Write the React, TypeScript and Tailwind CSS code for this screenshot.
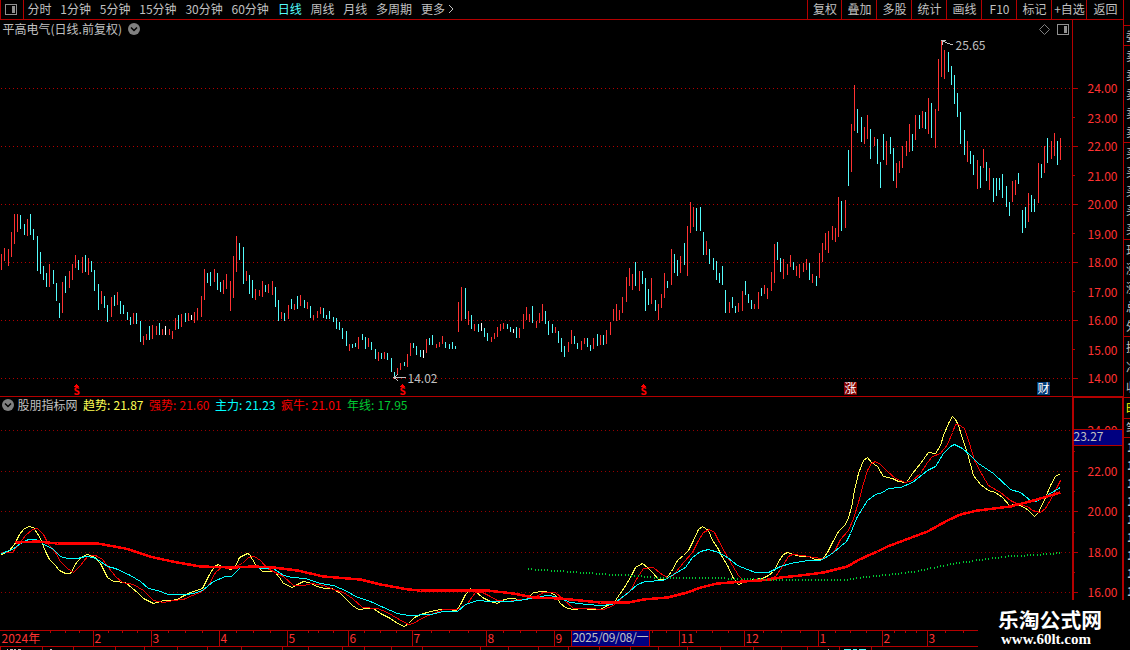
import { ReactNode } from 'react';
import clsx from 'clsx';

type Point = [number, number];

const PERIODS = ['分时', '1分钟', '5分钟', '15分钟', '30分钟', '60分钟', '日线', '周线', '月线', '多周期', '更多'];
const ACTIONS = ['复权', '叠加', '多股', '统计', '画线', 'F10', '标记', '+自选', '返回'];

// x, top, bottom, kind (r = up, c = down, w = flat)
const BARS = `1,254,270,r 4,248,261,r 8,249,266,r 11,232,257,r 14,214,244,r 17,214,232,r 20,215,229,c 24,224,235,c 27,219,236,r 30,214,235,c
33,229,240,c 37,236,271,c 40,252,274,c 43,266,280,c 46,273,287,c 49,264,287,r 53,270,284,c 56,283,301,c 59,303,318,c 62,282,313,r
65,276,293,c 69,271,288,r 72,264,280,r 75,255,268,r 78,260,270,c 82,257,273,r 85,255,272,c 88,258,275,r 91,261,272,c 94,270,291,c
98,284,310,c 101,291,304,r 104,296,308,c 107,305,322,c 111,297,317,r 114,295,306,c 117,292,305,r 120,301,314,c 123,305,314,c 127,312,320,c
130,317,325,c 133,313,324,r 136,313,324,c 140,321,342,c 143,336,345,r 146,334,340,r 149,326,340,c 152,325,339,r 156,326,335,r 159,323,335,c
162,329,335,r 165,326,335,w 169,329,335,r 172,331,339,r 175,318,330,r 178,315,329,c 181,314,327,r 185,313,322,c 188,313,321,r 191,315,320,w
194,312,323,r 197,308,320,r 201,296,317,r 204,269,300,r 207,273,283,c 210,272,286,c 214,269,282,r 217,273,290,c 220,282,292,c 223,280,294,r
226,274,289,r 230,281,311,r 233,256,298,r 236,236,272,r 239,243,260,c 243,247,284,c 246,271,281,r 249,275,294,c 252,280,298,c 255,289,300,r
259,290,296,r 262,281,297,r 265,285,292,c 268,284,293,r 272,281,295,r 275,287,307,c 278,300,321,c 281,312,319,r 284,313,321,c 288,305,319,r
291,299,309,c 294,304,310,r 297,296,309,c 300,295,306,r 304,300,308,c 307,302,309,r 310,306,318,c 313,315,320,r 317,311,318,r 320,307,314,r
323,308,318,c 326,315,319,c 329,311,319,c 333,317,322,c 336,318,329,c 339,322,330,c 342,328,339,c 346,331,346,c 349,344,351,r 352,344,348,c
355,343,347,c 358,337,349,r 362,334,340,c 365,337,349,c 368,338,347,r 371,342,350,c 375,349,359,c 378,352,361,r 381,353,359,c 384,352,359,r
387,353,360,c 391,358,372,c 394,372,378,c 397,368,374,r 400,363,370,r 404,362,366,c 407,354,367,r 410,343,356,r 413,343,348,c 416,346,355,c
420,350,357,c 423,350,358,w 426,339,353,r 429,338,345,c 432,335,345,c 436,344,348,r 439,342,347,r 442,336,344,r 445,342,348,c 449,344,349,c
452,342,349,c 455,346,349,c 458,302,332,r 461,287,321,r 465,288,319,c 468,311,325,r 471,315,329,c 474,324,331,r 478,324,332,c 481,323,331,w
484,328,337,c 487,333,341,c 491,337,342,r 494,333,339,r 497,327,337,r 500,324,331,r 503,323,329,r 507,324,329,c 510,327,332,c 513,329,333,w
516,327,338,c 519,328,338,r 523,314,329,r 526,307,320,r 529,314,322,r 532,306,323,c 536,321,328,r 539,313,323,r 542,304,321,r 545,311,324,c
548,321,335,c 552,324,333,c 555,327,333,r 558,331,343,c 561,338,352,c 564,346,357,c 568,342,352,r 571,330,344,r 574,336,344,c 577,343,349,c
581,341,350,r 584,338,344,r 587,338,347,c 590,345,351,c 593,338,349,r 597,334,346,c 600,335,345,r 603,335,345,c 606,330,344,r 610,322,335,r
613,309,321,r 616,304,321,r 619,310,320,r 622,297,313,r 626,277,302,r 629,268,286,r 632,274,290,r 635,262,286,c 639,271,291,r 642,271,284,c
645,278,311,c 648,289,305,c 651,278,304,r 655,300,311,c 658,304,320,r 661,294,308,r 664,273,298,r 667,281,288,c 671,249,285,r 674,254,273,c
677,260,276,c 680,256,273,r 684,243,265,c 687,226,276,r 690,202,233,r 693,207,227,r 696,208,231,c 700,207,231,c 703,232,255,c 706,241,255,r
709,249,264,c 713,258,270,c 716,261,280,c 719,273,283,c 722,266,285,c 725,290,313,c 729,302,313,r 732,297,308,c 735,306,313,c 738,303,312,r
742,291,311,r 745,281,295,c 748,294,303,c 751,300,309,c 754,304,309,r 758,292,309,r 761,288,296,c 764,285,294,r 767,288,299,r 771,272,291,r
774,244,283,r 777,242,260,c 780,258,272,c 783,259,279,r 787,264,275,r 790,255,267,r 793,262,270,c 796,266,276,r 799,264,278,r 803,263,272,r
806,259,270,r 809,263,280,c 812,274,283,r 816,276,286,c 819,253,278,r 822,243,262,r 825,233,250,r 828,231,253,r 832,226,240,r 835,228,242,r
838,197,237,r 841,201,231,c 845,200,228,r 848,150,186,c 851,124,172,r 854,85,131,r 857,109,133,c 861,117,142,c 864,127,144,r 867,115,139,r
870,129,159,c 874,137,146,r 877,139,164,c 880,162,188,c 883,134,160,c 886,141,165,r 890,137,154,c 893,148,181,c 896,163,188,r 899,161,173,r
902,146,168,r 906,141,156,r 909,124,152,r 912,134,151,c 915,115,140,r 919,115,129,c 922,111,128,r 925,112,129,c 928,98,134,r 931,103,138,c
935,109,148,r 938,59,111,r 941,40,77,r 944,50,79,r 948,52,72,c 951,66,85,c 954,75,104,c 957,93,117,c 960,112,144,c 964,130,155,c
967,141,162,r 970,151,164,c 973,155,175,c 977,160,189,r 980,166,188,c 983,149,168,r 986,162,181,c 989,168,190,r 993,178,202,c 996,178,196,c
999,178,190,c 1002,174,198,c 1006,186,207,c 1009,202,216,c 1012,181,202,r 1015,180,195,r 1018,173,184,c 1022,210,233,c 1025,207,228,c
1028,193,222,r 1031,195,212,c 1034,199,212,c 1038,163,203,r 1041,164,178,c 1044,146,173,r 1047,138,163,c 1051,141,159,r 1054,133,156,r
1057,141,165,c 1060,138,160,r`
    .split(/\s+/)
    .map((s) => {
        const [x, top, bottom, kind] = s.split(',');
        return { x: +x, top: +top, bottom: +bottom, kind };
    });

const BAR_COLORS: Record<string, string> = { r: '#ff3232', c: '#54fcfc', w: '#ffffff' };

const TREND = '1,554 5,552 9,550 14,544 19,534 23,529 28,526 33,527 40,538 45,551 49,559 54,564 59,570 65,573 70,573 76,562 82,556 87,554 95,557 100,563 107,577 113,581 125,582 132,588 137,592 143,598 153,603 163,600 170,600 177,599 182,596 190,592 202,588 208,576 214,566 218,564 223,567 231,569 235,566 239,557 247,553 249,554 255,564 262,571 274,571 279,577 283,583 292,587 297,584 303,581 308,582 317,586 324,588 332,588 340,593 345,598 352,605 358,609 368,608 373,608 380,613 390,618 397,623 404,626 408,623 414,617 420,614 430,611 440,609 447,609 456,610 460,604 465,594 470,588 475,591 482,597 490,601 497,603 504,599 510,598 520,599 526,599 533,592 543,591 550,592 555,595 560,603 565,607 572,609 583,608 590,609 600,609 607,605 613,603 617,597 624,587 630,577 635,567 642,563 647,567 652,572 658,579 665,579 671,571 677,560 683,555 688,550 693,540 698,529 702,526 708,530 712,540 717,547 722,557 727,565 733,578 738,584 743,582 753,579 762,578 768,575 773,571 780,558 783,554 787,552 793,554 800,556 808,556 815,559 822,559 827,552 832,542 838,531 845,524 848,517 851,507 854,490 858,473 863,460 867,457 871,462 877,466 883,476 892,478 898,481 906,482 912,473 920,463 928,452 935,453 940,445 943,435 948,423 952,416 955,419 958,425 962,438 967,453 973,475 980,484 988,490 995,492 1002,497 1009,505 1015,504 1020,505 1027,509 1034,516 1038,512 1045,497 1050,485 1055,476 1060,473';
const STRONG = '1,552 12,552 18,544 25,535 32,529 37,528 43,534 48,544 55,552 60,561 67,568 73,572 80,565 87,556 95,555 102,559 108,567 115,576 122,582 133,584 143,590 153,600 163,602 173,600 183,599 192,595 202,591 208,585 215,572 222,566 233,567 242,563 248,557 254,556 260,560 267,568 275,572 283,576 293,585 303,585 312,583 323,585 333,589 343,592 352,598 362,607 377,608 387,612 397,618 408,624 413,623 423,617 433,613 443,609 457,609 467,603 475,592 482,592 488,595 497,600 508,601 520,599 532,598 543,592 555,592 563,599 573,608 587,608 603,609 613,605 622,597 630,590 637,577 643,568 653,567 660,573 667,577 673,575 683,562 692,552 698,540 703,532 709,529 714,532 718,540 725,553 732,565 738,575 743,580 760,581 775,576 780,569 788,556 792,554 803,555 813,557 822,558 828,556 835,549 840,539 848,530 853,518 858,502 863,483 867,470 871,463 875,461 880,464 887,471 895,478 905,482 912,480 920,473 927,462 932,456 940,453 947,444 952,432 955,424 958,424 964,428 969,443 974,460 982,475 988,485 1000,492 1010,500 1018,504 1027,506 1032,510 1040,512 1045,508 1052,496 1060,480';
const MAIN = '1,553 12,549 20,543 28,539 35,539 42,543 47,546 52,548 60,556 67,558 77,558 85,556 93,557 100,561 107,566 115,568 130,575 140,581 148,588 157,590 168,594 185,594 193,593 202,590 213,581 225,576 231,576 240,567 248,566 262,568 273,568 283,575 292,577 305,578 320,583 333,585 347,591 355,596 370,601 383,607 397,613 408,615 430,614 443,611 457,611 465,604 477,600 490,601 510,601 525,599 537,596 550,595 560,598 570,602 587,604 600,605 612,604 620,598 628,592 637,584 645,581 663,580 673,574 685,567 692,557 700,551 708,549 718,552 727,557 737,565 747,569 755,572 768,572 780,566 790,563 807,560 820,560 827,556 833,552 840,546 846,541 850,533 856,518 862,508 867,500 875,494 882,492 888,488 900,487 912,482 927,470 935,466 943,453 950,446 954,444 962,448 970,455 978,463 993,473 1010,489 1020,492 1030,500 1035,501 1043,497 1060,487';
const BULL = '15,542 37,541 57,543 97,543 125,548 153,557 177,562 200,566 233,567 253,566 273,567 297,570 323,576 360,579 380,584 408,589 420,590 487,590 513,593 533,597 560,598 580,600 600,602 628,602 643,599 667,597 687,592 700,587 717,583 743,581 770,579 780,577 800,575 823,572 847,566 857,560 870,554 877,551 887,546 903,540 927,531 947,520 960,514 977,510 1010,506 1033,500 1060,492';

const YEAR: Point[] = [
    [528, 569], [543, 570], [573, 572], [600, 574], [620, 575], [640, 576], [660, 578], [720, 578], [733, 579], [800, 580],
    [847, 580], [857, 578], [877, 576], [913, 572], [933, 568], [953, 564], [987, 559], [1013, 556], [1037, 555], [1061, 553],
];

const LEGEND = [
    { label: '趋势', value: '21.87', color: 'text-[#ffff54]' },
    { label: '强势', value: '21.60', color: 'text-[#f00000]' },
    { label: '主力', value: '21.23', color: 'text-[#00ffff]' },
    { label: '疯牛', value: '21.01', color: 'text-[#ff0000]' },
    { label: '年线', value: '17.95', color: 'text-[#00c832]' },
];

const PRICES: Point[] = [
    [24, 88], [23, 117], [22, 146], [21, 175], [20, 204], [19, 233], [18, 262], [17, 291], [16, 320], [15, 349], [14, 378],
];
const LEVELS: Point[] = [[24, 430], [22, 471], [20, 511], [18, 552], [16, 592]];

const MONTHS = [
    { x: 93, text: '2' }, { x: 151, text: '3' }, { x: 219, text: '4' }, { x: 287, text: '5' }, { x: 348, text: '6' },
    { x: 412, text: '7' }, { x: 486, text: '8' }, { x: 554, text: '9' }, { x: 679, text: '11' }, { x: 744, text: '12' },
    { x: 818, text: '1' }, { x: 882, text: '2' }, { x: 927, text: '3' },
];
const TICKS = [50, 65, 79, 108, 122, 137, 168, 185, 202, 236, 253, 270, 308, 318, 333, 364, 380, 396, 431, 449, 468, 503, 520, 536, 652, 666, 696, 712, 728, 763, 781, 800, 835, 850, 866, 894, 905, 916, 945, 963];
const TABS = [0, 42, 73, 115, 144, 177, 207, 241, 282, 308, 342, 364, 391, 422, 480, 508, 538, 568, 599, 630, 658, 687, 720, 753, 781, 807, 839, 871];

const QUOTE_ROWS = [
    { cls: 'h-[26px]', rows: [] },
    { cls: 'h-[20px]', rows: ['委'] },
    { cls: 'h-[97px]', rows: ['卖', '卖', '卖', '卖', '卖'] },
    { cls: 'h-[97px]', rows: ['买', '买', '买', '买', '买'] },
    { cls: 'h-[97px]', rows: ['现', '涨', '涨', '总', '外'] },
    { cls: 'h-[61px]', rows: ['换', '净', '收'] },
    { cls: 'h-[21px]', rows: ['时'] },
    { cls: 'h-[19px]', rows: ['笔'] },
];

// Price of a line at a given x, between its two nearest nodes
function valueAt(line: Point[], x: number) {
    const i = Math.max(1, line.findIndex(([px]) => px >= x));
    const [x0, y0] = line[i - 1];
    const [x1, y1] = line[i];
    return Math.round(y0 + ((x - x0) / (x1 - x0)) * (y1 - y0));
}

function Line({ points, color, width = 1 }: { points: string; color: string; width?: number }) {
    return <polyline points={points} transform="translate(.5 .5)" fill="none" stroke={color} strokeWidth={width} />;
}

function GridLine({ y, color }: { y: number; color: string }) {
    return <path d={`M1 ${y + 0.5}H1071`} stroke={color} strokeDasharray="1 3" />;
}

function Chevron() {
    return (
        <svg width="12" height="12" viewBox="0 0 12 12" className="shrink-0">
            <circle cx="6" cy="6" r="6" fill="#808080" />
            <path d="M3 4.5l3 3 3-3" fill="none" stroke="#000" strokeWidth="1.5" />
        </svg>
    );
}

function PanelIcon({ color }: { color: string }) {
    return (
        <svg width="12" height="11" viewBox="0 0 12 11" shapeRendering="crispEdges">
            <rect x=".5" y=".5" width="11" height="10" rx="1" fill="none" stroke={color} />
            <rect x="7" y="2" width="3" height="7" fill={color} />
        </svg>
    );
}

function Dividend({ x }: { x: number }) {
    return (
        <g fill="#ff0000">
            <path d={`M${x} 384h1v1h1v1h1v1h-5v-1h1v-1h1z`} />
            <text x={x + 0.5} y="395" fontSize="10" fontWeight="bold" textAnchor="middle">S</text>
        </g>
    );
}

function Badge({ x, color, children }: { x: number; color: string; children: ReactNode }) {
    return (
        <g>
            <rect x={x} y="382" width="13" height="13" fill={color} />
            <text x={x + 0.5} y="393" fontSize="12" fill="#fff">{children}</text>
        </g>
    );
}

function Toolbar() {
    return (
        <div className="flex h-5 shrink-0 items-stretch border-b border-[#b40000] leading-[18px]">
            <div className="flex w-6 items-center justify-center border-x border-[#b40000] pr-0.5">
                <PanelIcon color="#909090" />
            </div>
            <div className="flex grow gap-[8.8px] pl-[3.5px]">
                {PERIODS.map((name) => (
                    <span key={name} className={clsx(name === '日线' && 'text-[#54fcfc]')}>{name}</span>
                ))}
                <svg width="6" height="10" viewBox="0 0 6 10" className="-ml-1.5 mt-1">
                    <path d="M1 1l4 4-4 4" fill="none" stroke="#c0c0c0" />
                </svg>
            </div>
            {ACTIONS.map((name) => (
                <span
                    key={name}
                    className="flex w-[35px] justify-center whitespace-nowrap border-l border-[#b40000] pl-px first-of-type:w-[34px] last:w-[37px]"
                >
                    {name}
                </span>
            ))}
        </div>
    );
}

function PricePanel() {
    return (
        <div className="relative h-[376px] shrink-0">
            <svg width="1123" height="376" viewBox="0 20 1123 376" shapeRendering="crispEdges" className="block overflow-visible">
                {PRICES.filter(([price]) => price % 2 === 0).map(([price, y]) => (
                    <GridLine key={price} y={y} color="#b40000" />
                ))}
                {BARS.map((bar) => (
                    <rect key={bar.x} x={bar.x} y={bar.top} width="1" height={bar.bottom - bar.top} fill={BAR_COLORS[bar.kind]} />
                ))}
                <rect x="1072" y="20" width="1" height="376" fill="#b40000" />
                {PRICES.map(([price, y]) => (
                    <g key={price}>
                        <rect x="1073" y={y} width={price % 2 ? 2 : 5} height="1" fill="#b40000" />
                        <text x="1087.5" y={price % 2 ? y + 6 : y + 5} fontSize="12" fill="#ff3232">{price.toFixed(2)}</text>
                    </g>
                ))}
                <g fill="none" stroke="#c0c0c0">
                    <path d="M953 44.5h-2l-4-1.500-6-2.500M942.500 45v-4.500h3M394 377.5h12M398 374l-4 3.5 4 3.5" />
                    <path d="M1044.500 24.500l5 5-5 5-5-5z" stroke="#808080" shapeRendering="auto" />
                </g>
                <text x="955.500" y="50" fontSize="12" fill="#c0c0c0">25.65</text>
                <text x="407.500" y="383" fontSize="12" fill="#c0c0c0">14.02</text>
                <Dividend x={76} />
                <Dividend x={402} />
                <Dividend x={643} />
                <Badge x={844} color="#800000">涨</Badge>
                <Badge x={1037} color="#003c78">财</Badge>
            </svg>
            <div className="absolute left-[2.5px] top-0 flex h-[18px] items-center gap-1.5">
                <span>平高电气(日线.前复权)</span>
                <Chevron />
            </div>
            <div className="absolute left-[1057px] top-1">
                <PanelIcon color="#909090" />
            </div>
        </div>
    );
}

function IndicatorPanel() {
    return (
        <div className="relative h-[234px] shrink-0">
            <svg width="1123" height="234" viewBox="0 396 1123 234" shapeRendering="crispEdges" className="block">
                <rect x="0" y="396" width="1123" height="1" fill="#b40000" />
                {LEVELS.map(([level, y]) => (
                    <g key={level}>
                        <GridLine y={y} color="#960000" />
                        <rect x="1074" y={y} width="4" height="1" fill="#b40000" />
                        <text x="1087.5" y={y + 5} fontSize="12" fill="#ff3232">{level.toFixed(2)}</text>
                    </g>
                ))}
                {[451, 491, 532, 572].map((y) => (
                    <rect key={y} x="1074" y={y} width="1" height="1" fill="#b40000" />
                ))}
                <Line points={TREND} color="#ffff54" />
                <Line points={STRONG} color="#f00000" />
                <Line points={MAIN} color="#00ffff" />
                <Line points={BULL} color="#ff0000" width={2.5} />
                {BARS.filter((bar) => bar.x > 527).map((bar) => (
                    <rect key={bar.x} x={bar.x - 1} y={valueAt(YEAR, bar.x) - 1} width="1" height="2" fill="#00c832" />
                ))}
                <path d="M1073 600V397H1123" fill="none" stroke="#b40000" strokeWidth="2" />
                <rect x="1122" y="396" width="1" height="204" fill="#b40000" />
                <rect x="1073" y="429" width="49" height="17" fill="#b40000" />
                <rect x="1074" y="430" width="48" height="15" fill="#000080" />
                <text x="1073.500" y="441" fontSize="12" fill="#c0c0c0">23.27</text>
            </svg>
            <div className="absolute left-0.5 top-[3px] flex h-3 items-center leading-3">
                <Chevron />
                <span className="ml-[3.5px] w-[65.5px]">股朋指标网</span>
                {LEGEND.map((item) => (
                    <span key={item.label} className={clsx('flex w-[66px] whitespace-nowrap', item.color)}>
                        <span className="w-[30.5px]">{item.label}:</span>
                        {item.value}
                    </span>
                ))}
            </div>
        </div>
    );
}

function TimeAxis() {
    return (
        <svg width="1123" height="20" viewBox="0 630 1123 20" shapeRendering="crispEdges" className="block shrink-0">
            <g fill="#b40000">
                <rect x="0" y="630" width="978" height="1" />
                <rect x="0" y="646" width="978" height="1" />
                {TICKS.map((x) => <rect key={x} x={x} y="631" width="1" height="2" />)}
                {TABS.map((x) => <rect key={x} x={x} y="647" width="1" height="3" />)}
                {MONTHS.map(({ x }) => <rect key={x} x={x} y="631" width="1" height="15" />)}
            </g>
            <g fill="#ff3232" fontSize="12">
                <text x="1.5" y="643">2024年</text>
                {MONTHS.map(({ x, text }) => <text key={x} x={x + 1.5} y="643">{text}</text>)}
            </g>
            <rect x="571" y="631" width="79" height="15" fill="#b40000" />
            <rect x="572" y="631" width="77" height="15" fill="#000080" />
            <text x="572.5" y="642" fontSize="12" textLength="76" fill="#c0c0c0">2025/09/08/一</text>
            <path d="M7 649.5h1m2 0h3m1 0h2m2 0h3M50 649.500h2" stroke="#c0c0c0" />
            <path d="M828 649.500h1" stroke="#c0c0c0" />
            <path d="M844 649.500h7m2 0h4m2 0h7" stroke="#54fcfc" />
        </svg>
    );
}

function QuoteStrip() {
    return (
        <div className="flex w-[7px] shrink-0 flex-col overflow-hidden border-l border-[#b40000]">
            {QUOTE_ROWS.map(({ cls, rows }, i) => (
                <div key={i} className={clsx('flex shrink-0 flex-col justify-around border-b border-[#b40000] pl-0.5', cls, i === 6 && 'text-[#ffff00]')}>
                    {rows.map((text, j) => <span key={j} className="w-3 leading-[18px]">{text}</span>)}
                </div>
            ))}
            <div className="flex flex-col pl-[3px]">
                {Array.from({ length: 9 }, (_, i) => (
                    <span key={i} className="h-[18px] font-bold leading-[18px]">1</span>
                ))}
            </div>
        </div>
    );
}

export default function App() {
    return (
        <div className="relative flex h-[650px] w-[1130px] overflow-hidden bg-black font-['Noto_Sans_CJK_SC',sans-serif] text-[12px] text-[#c0c0c0]">
            <div className="flex w-[1123px] shrink-0 flex-col">
                <Toolbar />
                <PricePanel />
                <IndicatorPanel />
                <TimeAxis />
            </div>
            <QuoteStrip />
            <div className="absolute bottom-0 right-0 flex h-[50px] w-[152px] flex-col items-start bg-black pl-5 pt-[7px] text-white">
                <span className="whitespace-nowrap text-[20.8px] font-bold leading-6">乐淘公式网</span>
                <span className="ml-[3px] font-['Liberation_Serif',serif] text-[15px] font-bold leading-4">www.60lt.com</span>
            </div>
        </div>
    );
}
